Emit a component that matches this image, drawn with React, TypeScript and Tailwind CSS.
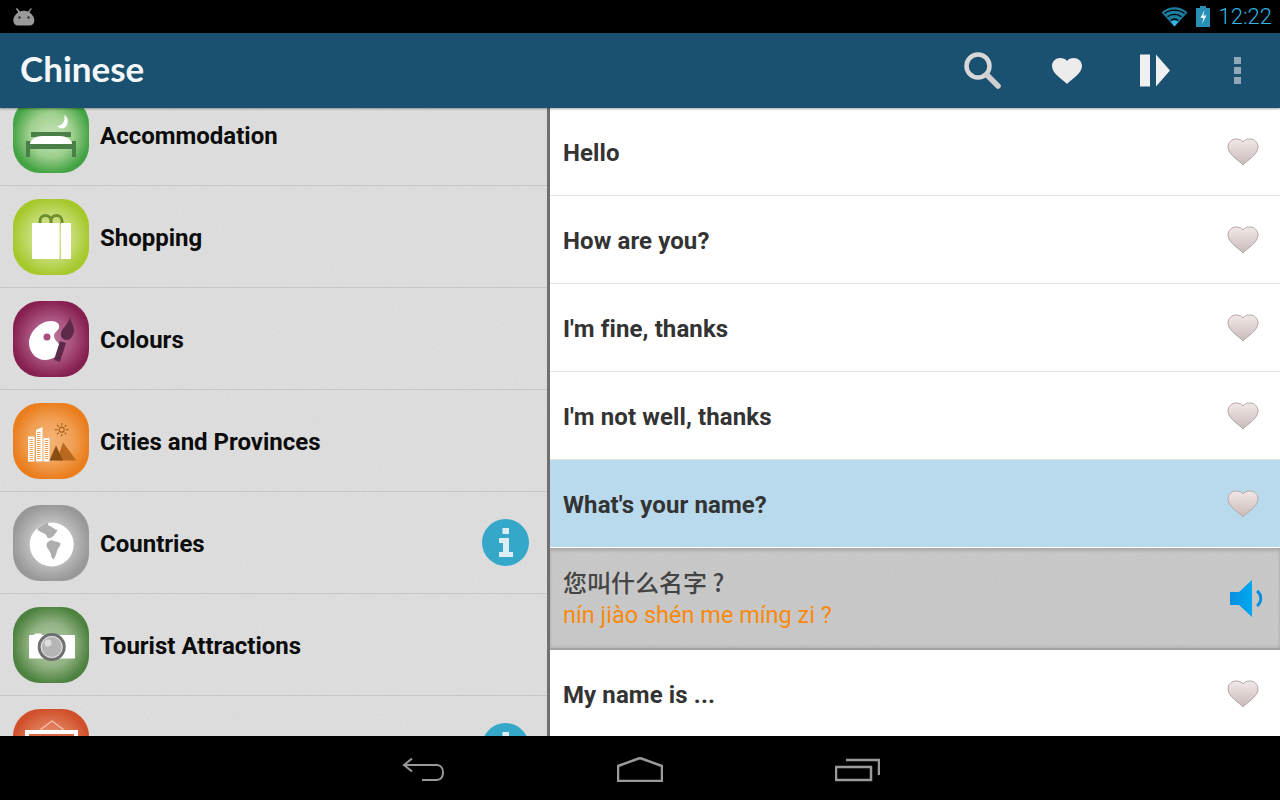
import React from "react";

const Grain = ({ id }: { id: string }) => (
  <svg className="pointer-events-none absolute inset-0 h-full w-full opacity-[0.1]">
    <filter id={id}>
      <feTurbulence type="fractalNoise" baseFrequency="0.55" numOctaves="2" seed="4" />
      <feColorMatrix type="saturate" values="0" />
    </filter>
    <rect width="100%" height="100%" filter={`url(#${id})`} />
  </svg>
);

const BedIcon = () => (
  <svg width="76" height="76" viewBox="0 0 76 76">
    <path d="M51 18a7.500 7.500 0 0 1 -1 13.500a7.500 7.500 0 0 1 -6 -2.500a8 8 0 0 0 7 -11z" fill="#fff" />
    <rect x="18" y="35" width="40" height="5" fill="#4a7f4a" />
    <path d="M13 44h4v3h42v-3h4v16h-4v-8h-42v8h-4z" fill="#4a7f4a" />
    <path d="M17 47c1 -5 6 -8 12 -8h18c6 0 11 3 12 8z" fill="#fff" />
  </svg>
);

const BagIcon = () => (
  <svg width="76" height="76" viewBox="0 0 76 76">
    <path d="M27 25v-3a5 5 0 0 1 11 0v3M38 25v-3a5 5 0 0 1 11 0v3" fill="none" stroke="#6f8f2c" strokeWidth="3" />
    <path d="M20 24h26.500v36h-26.500a1 1 0 0 1 -1 -1v-34a1 1 0 0 1 1 -1z" fill="#fff" />
    <path d="M48 24h9a1 1 0 0 1 1 1v34a1 1 0 0 1 -1 1h-9z" fill="#fff" />
  </svg>
);

const PaletteIcon = () => (
  <svg width="76" height="76" viewBox="0 0 76 76">
    <path d="M38 20c6 0 9 3 8 7c-1 3 -5 4 -5 8c0 5 6 6 6 12c0 7 -7 12 -15 12c-9 0 -16 -8 -16 -17c0 -11 11 -22 22 -22z" fill="#fff" />
    <circle cx="34" cy="36" r="3.500" fill="#a94f7d" />
    <path d="M47 40l6 2l-6 19l-6 -2z" fill="#5e2a4a" />
    <path d="M57 15c0 5 4 9 4 14c0 6 -4 10 -7 10c-4 0 -7 -3 -6 -7c1 -5 8 -9 9 -17z" fill="#5e2a4a" />
  </svg>
);

const CityIcon = () => (
  <svg width="76" height="76" viewBox="0 0 76 76">
    <rect x="15" y="33.500" width="6.500" height="25" fill="#fff" />
    <path d="M23 27l6.500 -3v34.500h-6.500z" fill="#fff" />
    <rect x="30.500" y="35" width="6" height="23.500" fill="#fff" />
    <g stroke="#efa25c" strokeDasharray="1 1">
      <path d="M18.200 36v21M25.800 29v28M33.500 37v20" strokeWidth="3.500" />
    </g>
    <path d="M44 57.500l6 -18l13.500 18z" fill="#b9681f" />
    <path d="M36.500 57.500l6.500 -15l7 15z" fill="#8a4d12" />
    <circle cx="48.700" cy="26.700" r="2.500" fill="none" stroke="#a8621c" strokeWidth="1.200" />
    <path d="M48.700 20v2.500M48.700 31v2.500M42 26.700h2.500M53 26.700h2.500M44 22l1.700 1.700M51.700 29.700l1.700 1.700M44 31.400l1.700 -1.700M51.700 23.700l1.700 -1.700" stroke="#a8621c" strokeWidth="1.200" />
  </svg>
);

const GlobeIcon = () => (
  <svg width="76" height="76" viewBox="0 0 76 76">
    <circle cx="38.700" cy="39.500" r="22" fill="#fff" />
    <path d="M24 24C27 21 31 18.500 35.500 17.500C34.500 19 35 20.500 37 21C39 21.500 41 24.500 44.500 25C44 27.500 42 28 41 30.500C39 32.500 36.500 33.500 34.500 33C34 30 32 29 30.500 28C28 27.500 26 26 24 24Z" fill="#aeaeae" />
    <path d="M33.500 39C35 36.500 38 34.500 40 35.500C42 37 46 36.500 47.500 38.500C47.500 41.500 44.500 43.500 44 46C43.500 49 42 52.500 40.300 54.500C38.500 53 38 50.500 37.500 48C36.500 45.500 34.500 44 34 42C33.500 41 33.500 40 33.500 39Z" fill="#aeaeae" />
  </svg>
);

const CameraIcon = () => (
  <svg width="76" height="76" viewBox="0 0 76 76">
    <path d="M16 29c0 -.500 .500 -1 1 -1h4l1 -1.500h6l1 1.500h32c.500 0 1 .500 1 1v21.500c0 .500 -.500 1 -1 1h-44c-.500 0 -1 -.500 -1 -1z" fill="#fff" />
    <circle cx="38.700" cy="40" r="12.500" fill="#b5b5b5" stroke="#6f6f6f" strokeWidth="3" />
    <circle cx="38.700" cy="40" r="10.500" fill="none" stroke="#e6e6e6" strokeWidth="1" />
    <circle cx="35" cy="36" r="3.500" fill="#ddd" />
  </svg>
);

const PictureIcon = () => (
  <svg width="76" height="76" viewBox="0 0 76 76">
    <path d="M27 21l12 -9l12 9" fill="none" stroke="#f3c4b0" strokeWidth="1.200" />
    <rect x="12" y="21" width="53" height="40" fill="#fff" />
    <rect x="16" y="25" width="45" height="32" fill="#d9694a" />
  </svg>
);

const InfoButton = () => (
  <div className="mr-[18px] flex h-[47px] w-[47px] shrink-0 items-center justify-center rounded-full bg-[#35a7c9]">
    <svg width="16" height="30" viewBox="0 0 16 30">
      <rect x="4.500" y="0" width="6.500" height="6" fill="#dceef3" />
      <path d="M1 10h10v14h4v5h-14v-5h4v-9h-4z" fill="#dceef3" />
    </svg>
  </div>
);

const Heart = () => (
  <svg className="blur-[0.6px]" width="32" height="28" viewBox="0 0 32 28">
    <defs>
      <linearGradient id="rowHeart" x1="0" y1="0" x2="0" y2="1">
        <stop offset="0" stopColor="#f1e9e8" />
        <stop offset="1" stopColor="#c9b9b9" />
      </linearGradient>
    </defs>
    <path d="M16 27c-3 -4 -15 -10 -15 -18c0 -5 4 -8 8 -8c3 0 6 1 7 3c1 -2 4 -3 7 -3c4 0 8 3 8 8c0 8 -12 14 -15 18z" fill="url(#rowHeart)" stroke="#b5a6a6" strokeWidth="1" />
  </svg>
);

const categories = [
  { name: "Accommodation", tile: "bg-[radial-gradient(circle,#c6e3b8_0%,#a0d08f_40%,#44a344_72%)]", Icon: BedIcon, info: false },
  { name: "Shopping", tile: "bg-[radial-gradient(circle,#d8e8a0_0%,#c6dc74_40%,#a5c82b_72%)]", Icon: BagIcon, info: false },
  { name: "Colours", tile: "bg-[radial-gradient(circle,#bb7a9b_0%,#a9527f_40%,#86204f_72%)]", Icon: PaletteIcon, info: false },
  { name: "Cities and Provinces", tile: "bg-[radial-gradient(circle,#f4b478_0%,#f1a157_40%,#ea7d1c_72%)]", Icon: CityIcon, info: false },
  { name: "Countries", tile: "bg-[radial-gradient(circle,#d2d2d2_0%,#bdbdbd_40%,#989898_72%)]", Icon: GlobeIcon, info: true },
  { name: "Tourist Attractions", tile: "bg-[radial-gradient(circle,#b5cda9_0%,#92b384_40%,#4e8240_72%)]", Icon: CameraIcon, info: false },
  { name: "", tile: "bg-[radial-gradient(circle,#e89a7e_0%,#e07a58_40%,#d0502a_72%)]", Icon: PictureIcon, info: true },
];

const phrases = ["Hello", "How are you?", "I'm fine, thanks", "I'm not well, thanks"];

const PhraseRow = ({ text, selected }: { text: string; selected?: boolean }) => (
  <div
    className={`flex h-[88px] shrink-0 items-center justify-between border-b pl-[13px] pr-[21px] ${
      selected ? "border-white bg-[#b8daec]" : "border-[#e2e2e2] bg-white"
    }`}
  >
    <span className="pt-0.5 font-['Roboto',sans-serif] text-[24px] font-bold tracking-[0.1px] text-[#333] [font-variant-ligatures:none]">{text}</span>
    <Heart />
  </div>
);

export default function App() {
  return (
    <div className="flex h-[800px] w-[1280px] flex-col overflow-hidden bg-black font-['Roboto',sans-serif]">
      {/* Status bar */}
      <div className="flex h-[33px] shrink-0 items-center justify-between bg-black pl-3 pr-2">
        <svg width="24" height="18" viewBox="0 0 24 18">
          <path d="M5 0l3 3.500a11 11 0 0 1 8 0l3 -3.500l.800 .800l-2.500 3.500c3 2 5 5 5 8.200c0 3 -2 5 -5 5h-11c-3 0 -5 -2 -5 -5c0 -3.200 2 -6.200 5 -8.200l-2.500 -3.500z" fill="#9a9a9a" />
          <circle cx="7.500" cy="9.500" r="1.300" fill="#333" />
          <circle cx="16.500" cy="9.500" r="1.300" fill="#333" />
        </svg>
        <div className="flex items-center">
          <svg width="27" height="21" viewBox="0 0 27 21">
            <path d="M13.500 20.500L0.500 6.500C8 -0.500 19 -0.500 26.500 6.500Z" fill="#1a7ea0" />
            <path d="M3.500 7.500C9 3 18 3 23.500 7.500M6.500 10.800C10.500 7.500 16.500 7.500 20.500 10.800M9.800 14.500C12 12.700 15 12.700 17.200 14.500" fill="none" stroke="#000" strokeWidth="1.300" />
            <path d="M13.500 20.500L9.800 16C12 14.300 15 14.300 17.200 16Z" fill="#33b5e5" />
          </svg>
          <svg className="ml-2" width="14" height="21" viewBox="0 0 14 21">
            <path d="M4 0h6v2h4v19h-14v-19h4z" fill="#2a8fb5" />
            <path d="M8.500 4l-4 8h3l-1.500 6l4.500 -8.500h-3z" fill="#e8f5fa" />
          </svg>
          <span className="ml-[9px] text-[22px] font-light text-[#33b5e5]">12:22</span>
        </div>
      </div>

      {/* Action bar */}
      <div className="relative z-10 flex h-[75px] shrink-0 items-center bg-[#1a5070] pl-[20px] shadow-[0_1px_2px_rgba(0,0,0,0.35)]">
        <h1 className="-mt-[5px] font-['Lato',sans-serif] text-[35px] font-bold leading-none text-[#f4f7f9]">Chinese</h1>
        <div className="ml-auto flex items-center">
          <svg className="mr-[50px]" width="37" height="37" viewBox="0 0 37 37">
            <circle cx="14" cy="14" r="11.500" fill="none" stroke="#d8d8d8" strokeWidth="4.500" />
            <path d="M23 23l11 11" stroke="#cfcfcf" strokeWidth="5.500" strokeLinecap="round" />
          </svg>
          <svg className="mr-[57px] blur-[0.5px]" width="32" height="28" viewBox="0 0 32 28">
            <path d="M16 27c-3 -4 -15 -10 -15 -18c0 -5 4 -8 8 -8c3 0 6 1 7 3c1 -2 4 -3 7 -3c4 0 8 3 8 8c0 8 -12 14 -15 18z" fill="#ececec" />
          </svg>
          <svg className="mr-[62px]" width="32" height="33" viewBox="0 0 32 33">
            <rect x="0" y="0.500" width="10" height="32" fill="#f0f0f0" />
            <path d="M16 0.500L30 16.500L16 32.500Z" fill="#f0f0f0" />
          </svg>
          <div className="mr-[39px] flex w-[7px] flex-col gap-[3px]">
            <div className="h-[7px] bg-[#8fa9b9]" />
            <div className="h-[7px] bg-[#8fa9b9]" />
            <div className="h-[7px] bg-[#8fa9b9]" />
          </div>
        </div>
      </div>

      {/* Main */}
      <div className="flex h-[628px] shrink-0 overflow-hidden">
        <div className="relative h-full w-[550px] shrink-0 overflow-hidden border-r-[3px] border-[#707070] bg-[#dedede]">
          <Grain id="listGrain" />
          <div className="relative -mt-6">
            {categories.map(({ name, tile, Icon, info }, i) => (
              <div key={i} className="flex h-[102px] items-center border-b border-[#c6c6c6] pl-[13px]">
                <div className={`h-[76px] w-[76px] shrink-0 overflow-hidden rounded-[27px] ${tile}`}>
                  <Icon />
                </div>
                <span className="ml-[11px] pt-0.5 text-[24px] font-bold text-[#0c0c0c]">{name}</span>
                {info && <div className="ml-auto"><InfoButton /></div>}
              </div>
            ))}
          </div>
        </div>

        <div className="flex min-w-0 flex-1 flex-col overflow-hidden bg-white">
          {phrases.map((p) => (
            <PhraseRow key={p} text={p} />
          ))}
          <PhraseRow text="What's your name?" selected />
          <div className="relative flex h-[102px] shrink-0 items-center justify-between border-b-2 border-[#a4a4a4] bg-[#c8c8c8] pl-[13px] pr-[16px] shadow-[inset_0_3px_3px_rgba(0,0,0,0.14),inset_0_-2px_3px_rgba(0,0,0,0.08)]">
            <Grain id="rowGrain" />
            <div className="relative flex flex-col">
              <span className="font-['Noto_Sans_CJK_SC',sans-serif] text-[24px] font-medium leading-[32px] text-[#444]">您叫什么名字 ?</span>
              <span className="mt-[1px] text-[23.500px] leading-[32px] text-[#f98a0c]">nín jiào shén me míng zi ?</span>
            </div>
            <svg className="relative" width="34" height="37" viewBox="0 0 34 37">
              <defs>
                <linearGradient id="speaker" x1="0" y1="0" x2="1" y2="0">
                  <stop offset="0" stopColor="#0a8fe0" />
                  <stop offset="1" stopColor="#00a8f0" />
                </linearGradient>
              </defs>
              <path d="M0 12h9L22 0v37L9 25H0z" fill="url(#speaker)" />
              <path d="M27 11c5 4 5 11 0 15" fill="none" stroke="#0a8fe0" strokeWidth="3" />
            </svg>
          </div>
          <PhraseRow text="My name is ..." />
        </div>
      </div>

      {/* Navigation bar */}
      <div className="flex h-[64px] shrink-0 items-start justify-center bg-black pt-[21px]">
        <svg className="ml-[2px] mr-[172px]" width="43" height="25" viewBox="0 0 43 25" fill="none" stroke="#9a9a9a" strokeWidth="2">
          <path d="M10 1.500L2 8l8 6.500" />
          <path d="M2 8h33c8 0 8 15 0 15H20" />
        </svg>
        <svg className="mr-[172px]" width="46" height="25" viewBox="0 0 46 25" fill="none" stroke="#9a9a9a" strokeWidth="2.500">
          <path d="M1 9L23 1l22 8v15H1z" />
        </svg>
        <svg width="45" height="25" viewBox="0 0 45 25" fill="none" stroke="#9a9a9a" strokeWidth="2.500">
          <rect x="1" y="10" width="35" height="13" />
          <path d="M11 3h33v15" />
        </svg>
      </div>
    </div>
  );
}
